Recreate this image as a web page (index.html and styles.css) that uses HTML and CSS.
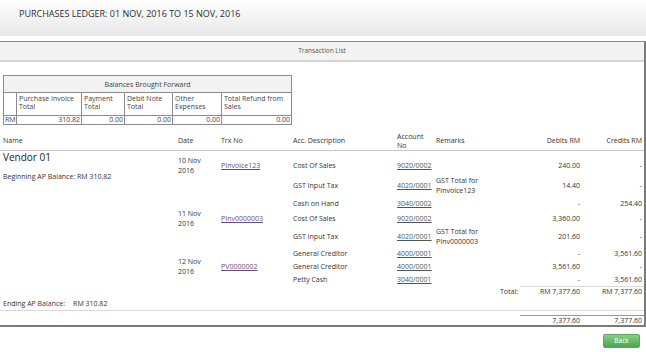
FILE: index.html
```html
<!DOCTYPE html>
<html>
<head>
    <title>Purchases Ledger</title>
    <meta charset="utf-8">
    <link rel="stylesheet" href="styles.css">
</head>
<body>
    <div class="page-head">
        <h1>PURCHASES LEDGER: 01 NOV, 2016 TO 15 NOV, 2016</h1>
    </div>

    <div class="panel">
        <div class="panel-title">Transaction List</div>
        <div class="panel-body">

            <!-- Balances Brought Forward -->
            <table class="bbf">
                <colgroup>
                    <col style="width:13px"><col style="width:65px"><col style="width:43px">
                    <col style="width:48px"><col style="width:49px"><col style="width:70px">
                </colgroup>
                <tr class="cap"><th colspan="6">Balances Brought Forward</th></tr>
                <tr class="lbl">
                    <th></th>
                    <th>Purchase Invoice Total</th>
                    <th>Payment Total</th>
                    <th>Debit Note Total</th>
                    <th>Other Expenses</th>
                    <th>Total Refund from Sales</th>
                </tr>
                <tr class="val">
                    <td class="cur">RM</td>
                    <td>310.82</td>
                    <td>0.00</td>
                    <td>0.00</td>
                    <td>0.00</td>
                    <td>0.00</td>
                </tr>
            </table>

            <!-- Ledger -->
            <table class="ledger">
                <colgroup>
                    <col class="w-name"><col class="w-date"><col class="w-trx"><col class="w-desc">
                    <col class="w-acct"><col class="w-rem"><col class="w-amt"><col class="w-amt">
                </colgroup>
                <thead>
                    <tr>
                        <th class="c-name">Name</th>
                        <th>Date</th>
                        <th>Trx No</th>
                        <th>Acc. Description</th>
                        <th>Account No</th>
                        <th>Remarks</th>
                        <th class="num">Debits RM</th>
                        <th class="num">Credits RM</th>
                    </tr>
                </thead>
                <tbody>
                    <tr class="first h25">
                        <td class="c-name" rowspan="9">
                            <div class="vendor">Vendor 01</div>
                            <div class="open-bal">Beginning AP Balance: RM 310.82</div>
                        </td>
                        <td><div class="date-txt">10 Nov<br>2016</div></td>
                        <td><a class="trx" href="#">PInvoice123</a></td>
                        <td>Cost Of Sales</td>
                        <td><a class="acct" href="#">9020/0002</a></td>
                        <td></td>
                        <td class="num">240.00</td>
                        <td class="num">-</td>
                    </tr>
                    <tr class="h20">
                        <td></td><td></td>
                        <td>GST Input Tax</td>
                        <td><a class="acct" href="#">4020/0001</a></td>
                        <td>GST Total for<br>PInvoice123</td>
                        <td class="num">14.40</td>
                        <td class="num">-</td>
                    </tr>
                    <tr class="h16">
                        <td></td><td></td>
                        <td>Cash on Hand</td>
                        <td><a class="acct" href="#">3040/0002</a></td>
                        <td></td>
                        <td class="num">-</td>
                        <td class="num">254.40</td>
                    </tr>
                    <tr class="h14">
                        <td><div class="date-txt">11 Nov<br>2016</div></td>
                        <td><a class="trx" href="#">PInv0000003</a></td>
                        <td>Cost Of Sales</td>
                        <td><a class="acct" href="#">9020/0002</a></td>
                        <td></td>
                        <td class="num">3,360.00</td>
                        <td class="num">-</td>
                    </tr>
                    <tr class="h22">
                        <td></td><td></td>
                        <td>GST Input Tax</td>
                        <td><a class="acct" href="#">4020/0001</a></td>
                        <td>GST Total for<br>PInv0000003</td>
                        <td class="num">201.60</td>
                        <td class="num">-</td>
                    </tr>
                    <tr class="h12">
                        <td></td><td></td>
                        <td>General Creditor</td>
                        <td><a class="acct" href="#">4000/0001</a></td>
                        <td></td>
                        <td class="num">-</td>
                        <td class="num">3,561.60</td>
                    </tr>
                    <tr class="h14">
                        <td><div class="date-txt">12 Nov<br>2016</div></td>
                        <td><a class="trx" href="#">PV0000002</a></td>
                        <td>General Creditor</td>
                        <td><a class="acct" href="#">4000/0001</a></td>
                        <td></td>
                        <td class="num">3,561.60</td>
                        <td class="num">-</td>
                    </tr>
                    <tr class="h13">
                        <td></td><td></td>
                        <td>Petty Cash</td>
                        <td><a class="acct" href="#">3040/0001</a></td>
                        <td></td>
                        <td class="num">-</td>
                        <td class="num">3,561.60</td>
                    </tr>
                    <tr class="h10 total">
                        <td></td><td></td><td></td><td></td>
                        <td class="num">Total:</td>
                        <td class="num sum">RM 7,377.60</td>
                        <td class="num sum">RM 7,377.60</td>
                    </tr>
                </tbody>
                <tfoot>
                    <tr class="ending">
                        <td class="c-name" colspan="8">Ending AP Balance:<span class="end-amt">RM 310.82</span></td>
                    </tr>
                    <tr class="gap"><td colspan="8"></td></tr>
                    <tr class="grand">
                        <td colspan="6"></td>
                        <td class="num sum">7,377.60</td>
                        <td class="num sum">7,377.60</td>
                    </tr>
                </tfoot>
            </table>
        </div>
    </div>

    <div class="actions">
        <button class="btn-back">Back</button>
    </div>
</body>
</html>
```

FILE: styles.css
```css
body {
    margin: 0;
    width: 646px;
    background: #fff;
    color: #333;
    font-family: 'Open Sans', 'DejaVu Sans', sans-serif;
}

/* Page Header */
.page-head {
    height: 36px;
    box-sizing: border-box;
    padding: 8px 0 0 19px;
    background: linear-gradient(#ffffff, #e7e7e7);
}

.page-head h1 {
    margin: 0;
    font-size: 9px;
    font-weight: normal;
    line-height: 12px;
    color: #2f2f2f;
}

/* Panel */
.panel {
    margin-top: 5px;
    border-top: 1px solid #8a8a8a;
    border-right: 2px solid #7a7a7a;
    border-bottom: 2px solid #7a7a7a;
}

.panel-title {
    height: 18px;
    line-height: 18px;
    background: #f3f3f3;
    border-bottom: 2px solid #d2d2d2;
    text-align: center;
    font-size: 6.5px;
    color: #555;
}

.panel-body {
    padding-top: 13px;
}

/* Balances Brought Forward */
.bbf {
    margin-left: 3px;
    width: 288px;
    table-layout: fixed;
    border-collapse: collapse;
    font-size: 7px;
    color: #444;
}

.bbf th,
.bbf td {
    border: 1px solid #8c8c8c;
    padding: 0 1px;
}

.bbf .cap th {
    height: 16px;
    background: #f2f2f2;
    font-weight: normal;
    text-align: center;
}

.bbf .lbl th {
    font-weight: normal;
    text-align: left;
    vertical-align: top;
    line-height: 8px;
    padding: 2px 2px 4px;
}

.bbf .val td {
    text-align: right;
    line-height: 8px;
}

.bbf .val .cur {
    text-align: left;
}

/* Ledger */
.ledger {
    width: 644px;
    margin-top: 6px;
    table-layout: fixed;
    border-collapse: collapse;
    font-size: 7px;
    line-height: 10px;
}

.w-name { width: 176px; }
.w-date { width: 43px; }
.w-trx { width: 72px; }
.w-desc { width: 104px; }
.w-acct { width: 39px; }
.w-rem { width: 86px; }
.w-amt { width: 62px; }

.ledger th {
    height: 19px;
    padding: 0 2px;
    border-bottom: 1px solid #c8c8c8;
    font-weight: normal;
    text-align: left;
    line-height: 9px;
}

.ledger td {
    padding: 0 2px;
}

.ledger th.c-name,
.ledger td.c-name {
    padding-left: 3px;
}

.ledger td[rowspan] {
    vertical-align: top;
}

.ledger .num {
    text-align: right;
}

.ledger .first td {
    padding-top: 5px;
}

.ledger .first td.c-name {
    padding-top: 0;
}

.h25 { height: 25px; }
.h22 { height: 22px; }
.h20 { height: 20px; }
.h16 { height: 16px; }
.h14 { height: 14px; }
.h13 { height: 13px; }
.h12 { height: 12px; }
.h10 { height: 10px; }

.vendor {
    font-size: 10px;
    line-height: 12px;
    color: #222;
}

.open-bal {
    margin-top: 9px;
}

/* date block is taller than its row, let it hang over */
.date-txt {
    margin: -5px 0;
}

a.trx {
    color: #6d4c78;
}

a.acct {
    color: #555;
}

.total .sum {
    border-top: 1px solid #dcdcdc;
}

.ending td {
    height: 13px;
    border-bottom: 1px solid #d8d8d8;
}

.end-amt {
    margin-left: 8px;
}

.gap td {
    height: 4px;
    padding: 0;
}

.grand td {
    height: 9px;
    line-height: 9px;
}

.grand .sum {
    border-top: 1px solid #9a9a9a;
}

/* Actions */
.actions {
    display: flex;
    justify-content: flex-end;
    padding: 7px 6px 0 0;
}

.btn-back {
    width: 37px;
    height: 14px;
    padding: 0;
    border: 1px solid #5aa85a;
    border-radius: 2px;
    background: linear-gradient(#86d086, #4ea64e);
    color: #fff;
    font-family: 'Open Sans', sans-serif;
    font-size: 6.5px;
    line-height: 12px;
}
```
